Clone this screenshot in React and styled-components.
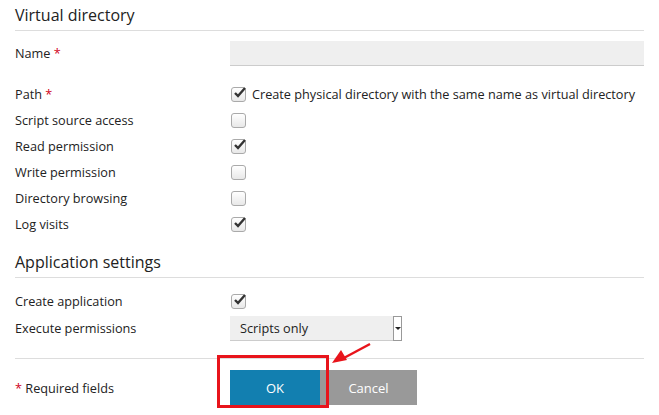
import React from "react";
import styled, { createGlobalStyle } from "styled-components";

const G = createGlobalStyle`
  body { margin: 0; background: #fff; font-family: "Open Sans", sans-serif; color: #222; }
`;
const Page = styled.div`padding: 4px 0 0 15px; position: relative; width: 644px; height: 415px; box-sizing: border-box; overflow: hidden;`;
const H = styled.div`
  font-size: 16px; color: #222; padding-bottom: 4px; border-bottom: 1px solid #ddd;
  margin-top: ${p => p.$mt || 0}px; margin-bottom: ${p => p.$mb || 4}px;
`;
const Row = styled.div`display: flex; align-items: center; height: ${p => p.$h || 26}px; font-size: 12.7px; margin-bottom: ${p => p.$mb || 0}px;`;
const Label = styled.div`width: 215px; flex: none;`;
const Star = styled.span`color: #d0021b;`;
const Input = styled.div`flex: 1; height: 24px; background: #efefef; border-bottom: 1px solid #ccc;`;
const BoxW = styled.span`
  width: 13px; height: 13px; border: 1px solid #aaa; border-radius: 3px; background: linear-gradient(#fff,#e8e8e8);
  position: relative; flex: none; margin-left: 1px; margin-right: 6px;
`;
const Tick = styled.svg`position: absolute; left: 1px; top: -2px;`;
const Check = ({ on }) => (
  <BoxW>{on && <Tick width="14" height="13" viewBox="0 0 14 13"><path d="M2 7l3 3 7-8" fill="none" stroke="#333" strokeWidth="2.4" /></Tick>}</BoxW>
);
const Select = styled.div`
  width: 172px; height: 25px; background: #efefef; display: flex; align-items: center;
  padding-left: 10px; box-sizing: border-box; position: relative; border-bottom: 1px solid #ccc;
`;
const Caret = styled.span`
  position: absolute; right: 0; top: 0; width: 9px; height: 25px; background: #fff; border: 1px solid #999;
  box-sizing: border-box; display: flex; align-items: center; justify-content: center;
  &::after { content: ""; border: 3px solid transparent; border-top: 3px solid #222; margin-top: 3px; }
`;
const Sep = styled.div`border-top: 1px solid #ddd; margin-top: 21px;`;
const Footer = styled.div`display: flex; align-items: center; font-size: 12.7px; padding-top: 11px;`;
const Btn = styled.div`
  width: ${p => p.$w}px; height: 35px; background: ${p => p.$bg}; color: #fff; font-size: 13px;
  display: flex; align-items: center; justify-content: center;
`;
const Hl = styled.div`
  position: absolute; left: 217px; top: 355px; width: 106px; height: 47px; border: 3px solid #e8141b; z-index: 2;
`;
const Arrow = styled.svg`position: absolute; left: 326px; top: 338px; z-index: 2;`;

export default function App() {
  return (
    <Page>
      <G />
      <H>Virtual directory</H>
      <Row $h={36} $mb={10}><Label>Name <Star>*</Star></Label><Input /></Row>
      <Row><Label>Path <Star>*</Star></Label><Check on />Create physical directory with the same name as virtual directory</Row>
      <Row><Label>Script source access</Label><Check /></Row>
      <Row><Label>Read permission</Label><Check on /></Row>
      <Row><Label>Write permission</Label><Check /></Row>
      <Row><Label>Directory browsing</Label><Check /></Row>
      <Row><Label>Log visits</Label><Check on /></Row>
      <H $mt={14} $mb={5}>Application settings</H>
      <Row $h={36}><Label>Create application</Label><Check on /></Row>
      <Row $h={18}><Label>Execute permissions</Label><Select>Scripts only<Caret /></Select></Row>
      <Sep />
      <Footer>
        <Label><Star>*</Star> Required fields</Label>
        <Btn $w={90} $bg="#127fb0">OK</Btn>
        <Btn $w={97} $bg="#999">Cancel</Btn>
      </Footer>
      <Hl />
      <Arrow width="50" height="30" viewBox="0 0 50 30">
        <path d="M44 6L16 21" stroke="#e8141b" strokeWidth="2.5" />
        <path d="M6 25l9-13 6 10z" fill="#e8141b" />
      </Arrow>
    </Page>
  );
}
